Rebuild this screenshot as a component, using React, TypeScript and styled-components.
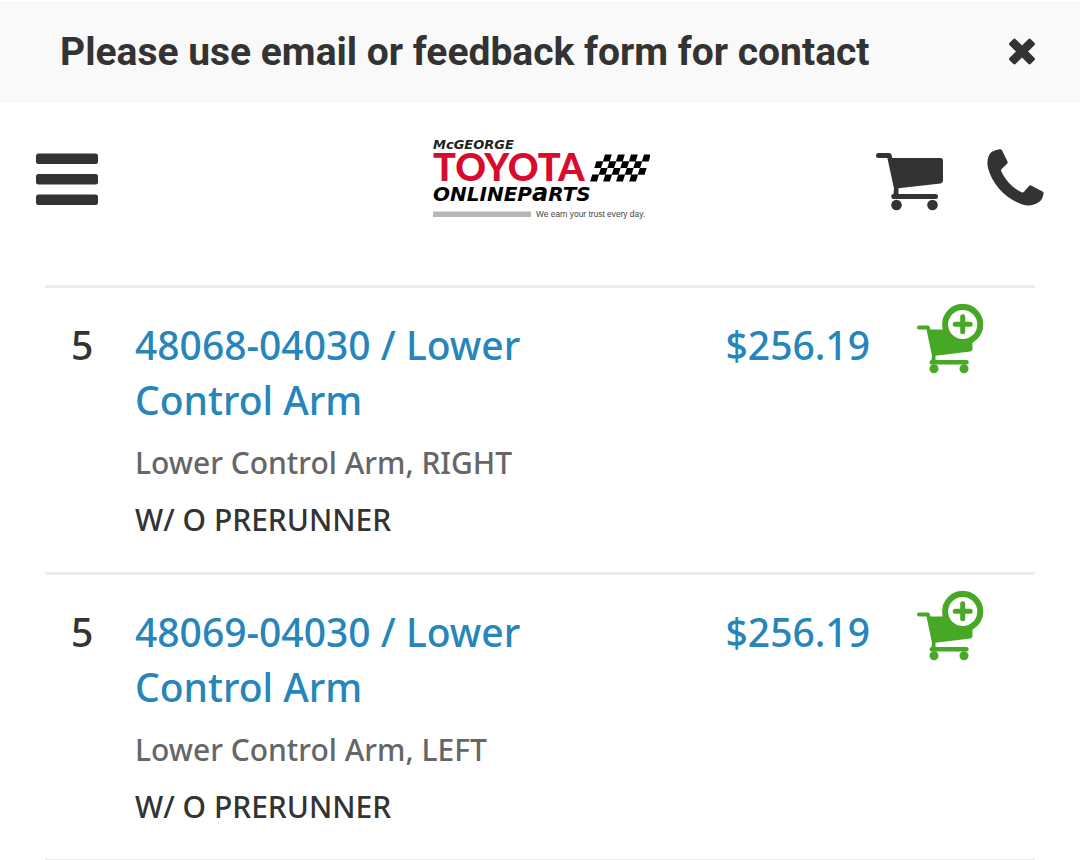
import React from "react";
import styled, { createGlobalStyle } from "styled-components";

const Global = createGlobalStyle`
  *, *::before, *::after { box-sizing: border-box; }
  body {
    margin: 0;
    background: #fff;
    color: #333;
    font-family: "Noto Sans", "Open Sans", sans-serif;
  }
`;

const Notice = styled.div`
  display: flex;
  align-items: center;
  justify-content: space-between;
  padding: 24px 44px 24px 60px;
  margin-top: 1px;
  background: #f9f9f9;
`;

const NoticeText = styled.p`
  margin: 0;
  font: 700 39px/54px Roboto, sans-serif;
`;

const IconButton = styled.button`
  display: flex;
  padding: 0;
  border: 0;
  background: none;
  color: ${(p) => p.color || "#333"};
  cursor: pointer;
`;

const Header = styled.header`
  display: grid;
  grid-template-columns: 1fr auto 1fr;
  align-items: center;
  padding: 34px 36px 64px;
`;

const HeaderActions = styled.div`
  display: flex;
  align-items: center;
  justify-content: flex-end;
  gap: 44px;
`;

const IconLink = styled.a`
  display: flex;
  color: #333;
`;

const Main = styled.main`
  padding: 0 45px;
`;

const PartsTable = styled.table`
  width: 100%;
  border-spacing: 0;
  border-bottom: 3px solid #ececec;
`;

const Cell = styled.td`
  vertical-align: top;
  padding: 29px 0 24px;
  border-top: 3px solid #ececec;
  font-size: 39px;
  font-weight: 500;
  line-height: 55px;
`;

const RefCell = styled(Cell)`
  width: 90px;
  padding-left: 26px;
`;

const PriceCell = styled(Cell)`
  width: 255px;
  text-align: right;
  color: #2685ba;
`;

const CartCell = styled(Cell)`
  width: 165px;
  padding: 16px 0 0 47px;
`;

const PartLink = styled.a`
  display: block;
  margin-bottom: 7px;
  color: #2685ba;
  text-decoration: none;
`;

const Note = styled.p<{ $muted?: boolean }>`
  margin: 0;
  font-size: 30px;
  line-height: 57px;
  color: ${(p) => (p.$muted ? "#666" : "#333")};
`;

const CloseIcon = () => (
  <svg width="28" height="28" viewBox="0 0 28 28" fill="currentColor" aria-hidden="true">
    <rect x="-1" y="9.2" width="30" height="8.6" rx="1.8" transform="rotate(45 14 13.5)" />
    <rect x="-1" y="9.2" width="30" height="8.6" rx="1.8" transform="rotate(-45 14 13.5)" />
  </svg>
);

const MenuIcon = () => (
  <svg width="62" height="52" viewBox="0 0 62 52" fill="currentColor" aria-hidden="true">
    <rect y="0.5" width="62" height="10.5" rx="2.5" />
    <rect y="21" width="62" height="10.5" rx="2.5" />
    <rect y="41.5" width="62" height="10.5" rx="2.5" />
  </svg>
);

const CartIcon = () => (
  <svg width="67" height="64" viewBox="0 -6 67 64" fill="currentColor" aria-hidden="true">
    <path d="M2.5 0H13.2Q15 0 15.6 2L16.3 5H65Q67 5 67 7.5V27Q67 30 64.5 30.4L22.5 35.2V41H59.5A2.5 2.5 0 0 1 59.5 46H18A2.5 2.5 0 0 1 17.5 41L18 35.5L11.4 5H2.5A2.5 2.5 0 0 1 2.5 0Z" />
    <circle cx="20.5" cy="52" r="5.3" />
    <circle cx="56.5" cy="52" r="5.3" />
  </svg>
);

const PhoneIcon = () => (
  <svg width="57" height="61" viewBox="0 0 57 61" fill="currentColor" aria-hidden="true">
    <path d="M11.5 0.4C13.5 0 14.5 0.3 15.2 1.7L20.4 12.2C21 13.5 20.8 14 19.8 15L14.2 20.5C14 21 14 21.8 14.5 22.8C18.5 31 25 38.5 34.5 43.3C35.5 43.8 36.3 43.5 37 42.8L42 37C42.8 36.2 43.6 36.2 44.5 36.7L55.5 42.5C56.6 43.1 56.8 43.8 56.5 45C55.5 49 54.5 51.5 52 53C47.5 56.3 41.5 57.4 35.5 55.5C19 50 5.5 36 1 19C-0.5 12.5 1 6 4.5 3C6.5 1.5 9 0.9 11.5 0.4Z" />
  </svg>
);

const AddToCartIcon = () => (
  <svg width="67" height="70" viewBox="0 0 67 70" fill="currentColor" aria-hidden="true">
    <path d="M2 21.5H11Q12.3 21.5 12.8 23L13.4 25.5H53Q55.5 26 55.5 28V45Q55.5 47 53.3 47.5L18.5 51.8V56H49.5A2 2 0 0 1 49.5 60.5H15A2 2 0 0 1 14.5 56L15 52L9.5 25.5H2A2 2 0 0 1 2 21.5Z" />
    <circle cx="17" cy="64.7" r="4.5" />
    <circle cx="47" cy="64.7" r="4.5" />
    <circle cx="45.7" cy="20.5" r="17.6" fill="#fff" stroke="currentColor" strokeWidth="6" />
    <path d="M45.7 12.8V27.7M38.2 20.2H53.2" stroke="currentColor" strokeWidth="5" strokeLinecap="round" />
  </svg>
);

const flagRows = [0, 1, 2, 3];
const flagColumns = [0, 1, 2, 3, 4, 5, 6, 7];

const Logo = () => (
  <svg width="220" height="84" viewBox="-3 0 220 84" role="img" aria-label="McGeorge Toyota Online Parts">
    <text x="0" y="11.5" fontFamily="DejaVu Sans" fontWeight="700" fontStyle="italic" fontSize="13" fill="#222">McGEORGE</text>
    <text x="0" y="44" fontFamily="Lato" fontWeight="900" fontSize="38" fill="#d80b2c">TOYOTA</text>
    <text x="0" y="64" fontFamily="DejaVu Sans" fontWeight="700" fontStyle="italic" fontSize="20" fill="#000">
      ONLINEP<tspan fontSize="24">a</tspan>RTS
    </text>
    <rect x="0" y="74.5" width="98" height="5.5" fill="#b5b7b6" />
    <text x="103" y="80" fontFamily="Liberation Sans" fontSize="8.4" fill="#444">We earn your trust every day.</text>
    <g transform="matrix(1 0 -0.31 1 165.5 17.5)">
      {flagRows.map((r) =>
        flagColumns.map((c) =>
          (r + c) % 2 === 1 ? <rect key={`${r}-${c}`} x={c * 6.5} y={r * 6.7} width="6.8" height="6.9" /> : null
        )
      )}
    </g>
  </svg>
);

const parts = [
  { ref: "5", number: "48068-04030", name: "Lower Control Arm", note: "Lower Control Arm, RIGHT", fit: "W/ O PRERUNNER", price: "$256.19" },
  { ref: "5", number: "48069-04030", name: "Lower Control Arm", note: "Lower Control Arm, LEFT", fit: "W/ O PRERUNNER", price: "$256.19" },
];

export default function App() {
  return (
    <>
      <Global />
      <Notice>
        <NoticeText>Please use email or feedback form for contact</NoticeText>
        <IconButton aria-label="Close notice"><CloseIcon /></IconButton>
      </Notice>
      <Header>
        <IconButton aria-label="Open menu"><MenuIcon /></IconButton>
        <IconLink href="#home"><Logo /></IconLink>
        <HeaderActions>
          <IconLink href="#cart" aria-label="Cart"><CartIcon /></IconLink>
          <IconLink href="#call" aria-label="Call us"><PhoneIcon /></IconLink>
        </HeaderActions>
      </Header>
      <Main>
        <PartsTable>
          <tbody>
            {parts.map((p) => (
              <tr key={p.number}>
                <RefCell>{p.ref}</RefCell>
                <Cell>
                  <PartLink href={`#${p.number}`}>{`${p.number} / ${p.name}`}</PartLink>
                  <Note $muted>{p.note}</Note>
                  <Note>{p.fit}</Note>
                </Cell>
                <PriceCell>{p.price}</PriceCell>
                <CartCell>
                  <IconButton color="#46a824" aria-label={`Add ${p.number} to cart`}><AddToCartIcon /></IconButton>
                </CartCell>
              </tr>
            ))}
          </tbody>
        </PartsTable>
      </Main>
    </>
  );
}
